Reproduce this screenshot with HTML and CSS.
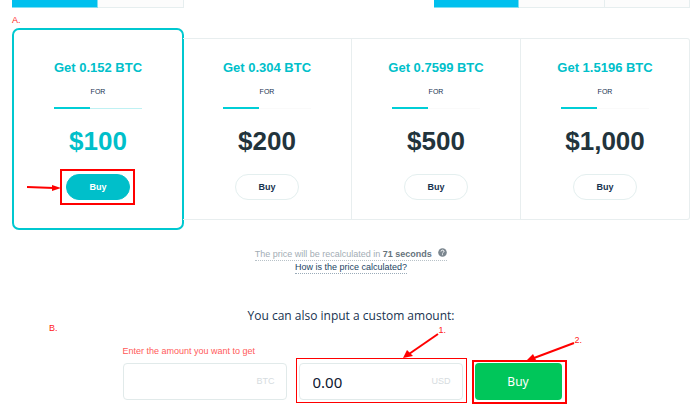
FILE: index.html
```html
<!DOCTYPE html>
<html lang="en">
<head>
<meta charset="utf-8">
<title>Buy bitcoin</title>
<link rel="stylesheet" href="styles.css">
</head>
<body>
<main class="page">
  <div class="tabs">
    <div class="tab-group tab-group-two"><span class="tab active"></span><span class="tab"></span></div>
    <div class="tab-group"><span class="tab active"></span><span class="tab"></span><span class="tab"></span></div>
  </div>

  <p class="step">A.</p>
  <section class="plans">
    <article class="plan featured">
      <h2>Get 0.152 BTC</h2>
      <p class="for">FOR</p>
      <div class="rule"></div>
      <p class="price">$100</p>
      <div class="marked">
        <button class="buy" type="button">Buy</button>
        <span class="frame frame-plan"></span>
        <svg class="arrow arrow-plan" width="34" height="10" viewBox="0 0 34 10"><path d="M0 4L27 5" stroke="#f00" stroke-width="2"/><path d="M25 2L34 5L25 8Z" fill="#f00"/></svg>
      </div>
    </article>
    <article class="plan">
      <h2>Get 0.304 BTC</h2>
      <p class="for">FOR</p>
      <div class="rule"></div>
      <p class="price">$200</p>
      <button class="buy" type="button">Buy</button>
    </article>
    <article class="plan">
      <h2>Get 0.7599 BTC</h2>
      <p class="for">FOR</p>
      <div class="rule"></div>
      <p class="price">$500</p>
      <button class="buy" type="button">Buy</button>
    </article>
    <article class="plan">
      <h2>Get 1.5196 BTC</h2>
      <p class="for">FOR</p>
      <div class="rule"></div>
      <p class="price">$1,000</p>
      <button class="buy" type="button">Buy</button>
    </article>
  </section>

  <section class="notes">
    <p class="recalc">The price will be recalculated in <b>71 seconds</b>
      <svg class="help" width="9" height="9" viewBox="0 0 9 9"><circle cx="4.5" cy="4.5" r="4.3" fill="#7b868f"/><path d="M3 3.5C3 1.7 6 1.7 6 3.4C6 4.4 4.5 4.3 4.5 5.5M4.5 6.3V7.2" fill="none" stroke="#fff" stroke-width="1"/></svg>
    </p>
    <a class="how" href="#calculation">How is the price calculated?</a>
  </section>

  <section class="custom">
    <h3>You can also input a custom amount:</h3>
    <span class="step step-b">B.</span>
    <form class="amounts">
      <label class="hint" for="btc">Enter the amount you want to get</label>
      <div class="field">
        <input id="btc" type="text">
        <span class="unit">BTC</span>
      </div>
      <div class="field">
        <input id="usd" type="text" value="0.00" aria-label="USD">
        <span class="unit">USD</span>
        <span class="frame frame-usd"></span>
        <svg class="arrow arrow-usd" width="36" height="26" viewBox="0 0 36 26"><path d="M35 1L6 21" stroke="#f00" stroke-width="2"/><path d="M0 25L4 17L10 23Z" fill="#f00"/></svg>
        <span class="number number-usd">1.</span>
      </div>
      <div class="field">
        <button class="submit" type="button">Buy</button>
        <span class="frame frame-submit"></span>
        <svg class="arrow arrow-submit" width="48" height="20" viewBox="0 0 48 20"><path d="M47 1L7 16" stroke="#f00" stroke-width="2"/><path d="M0 18L6 12L9 18Z" fill="#f00"/></svg>
        <span class="number number-submit">2.</span>
      </div>
    </form>
  </section>
</main>
</body>
</html>
```

FILE: styles.css
```css
* { box-sizing: border-box; }

body {
  margin: 0;
  background: #fff;
  color: #17324f;
  font-family: "Liberation Sans", Arial, sans-serif;
  font-size: 9px;
}

h2, h3, p { margin: 0; }
button, input { font: inherit; color: inherit; }

.page { padding: 0 10px 8px 12px; }

.tabs { display: flex; justify-content: space-between; }
.tab-group { display: flex; width: 256px; }
.tab-group-two { width: 172px; }
.tab {
  flex: 1;
  height: 8px;
  background: #fcfcfc;
  border: solid #e6eeef;
  border-width: 0 1px 1px 0;
}
.tab.active { background: #00c0ee; border-color: #7fdff2; }

.step { color: #ff2020; font-size: 9px; line-height: 12px; }
p.step { padding-top: 6px; height: 20px; }

.plans {
  display: grid;
  grid-template-columns: repeat(4, 1fr);
  align-items: center;
  padding-left: 2px;
}
.plan {
  display: flex;
  flex-direction: column;
  align-items: center;
  height: 182px;
  padding-top: 20px;
  border: solid #e8eeef;
  border-width: 1px 1px 1px 0;
}
.plan:last-child { border-radius: 0 3px 3px 0; }
.plan.featured {
  height: 202px;
  margin: 0 -1px 0 -2px;
  padding-top: 29px;
  border: 2px solid #00c8d0;
  border-radius: 7px;
}
.plan h2 {
  color: #00bfca;
  font-size: 13px;
  line-height: 18px;
}
.for { margin-top: 9px; font-size: 7px; line-height: 12px; }
.rule {
  width: 88px;
  height: 2px;
  margin-top: 9px;
  background: linear-gradient(#00ced6, #00ced6) 0 0 / 36px 2px no-repeat, linear-gradient(#fafafa, #fafafa) 0 1px / 100% 1px no-repeat;
}
.featured .rule {
  background: linear-gradient(#00ced6, #00ced6) 0 0 / 36px 2px no-repeat, linear-gradient(#bff1f3, #bff1f3) 0 1px / 100% 1px no-repeat;
}
.price {
  margin-top: 16px;
  color: #22343c;
  font-size: 26px;
  font-weight: bold;
  line-height: 32px;
}
.featured .price { color: #00bfca; }
.marked { position: relative; margin-top: 17px; }
.buy {
  display: block;
  width: 64px;
  height: 26px;
  margin-top: 17px;
  padding: 0;
  background: #fff;
  border: 1px solid #e4efef;
  border-radius: 13px;
  font-size: 9px;
  font-weight: bold;
}
.featured .buy { margin-top: 0; background: #00bfca; border-color: #00bfca; color: #fff; }

.frame { position: absolute; border: 2px solid #f00; pointer-events: none; }
.frame-plan { inset: -5px -5px -5px -6px; }
.frame-usd { inset: -5px -4px -3px -3px; border-width: 1px; }
.frame-submit { inset: -3px -5px -4px -3px; }
.arrow { position: absolute; }
.arrow-plan { left: -39px; top: 9px; }
.arrow-usd { left: 104px; top: -30px; }
.arrow-submit { left: 52px; top: -21px; }
.number { position: absolute; color: #ff2020; font-size: 9px; line-height: 12px; }
.number-usd { left: 140px; top: -39px; }
.number-submit { left: 100px; top: -29px; }

.notes {
  display: flex;
  flex-direction: column;
  align-items: center;
  padding-top: 18px;
}
.recalc {
  height: 13px;
  border-bottom: 1px dotted #b8c2c8;
  color: #a3adb5;
  line-height: 12px;
}
.recalc b { color: #66737c; }
.help { margin-left: 4px; vertical-align: 0; }
.how {
  height: 13px;
  border-bottom: 1px dotted #9aabb8;
  color: #1d4563;
  line-height: 12px;
  text-decoration: none;
}

.custom { position: relative; padding-top: 33px; }
.custom h3 {
  font-family: "Open Sans", sans-serif;
  font-size: 12px;
  font-weight: normal;
  line-height: 18px;
  text-align: center;
}
.step-b { position: absolute; left: 37px; top: 48px; }
.amounts {
  display: grid;
  grid-template-columns: 164px 164px 87px;
  justify-content: center;
  column-gap: 12px;
  row-gap: 6px;
  margin-top: 20px;
  padding-right: 18px;
}
.hint { grid-column: 1 / -1; color: #ff5a5a; font-size: 9px; line-height: 12px; }
.field { position: relative; }
.field input {
  display: block;
  width: 100%;
  height: 37px;
  padding: 0 44px 0 13px;
  border: 1px solid #e1eaea;
  border-radius: 4px;
  background: #fff;
  color: #0c1630;
  font-family: "Noto Sans", sans-serif;
  font-size: 15px;
}
.unit { position: absolute; right: 12px; top: 12px; color: #d6dce0; line-height: 12px; }
.submit {
  width: 100%;
  height: 37px;
  padding: 0;
  border: 0;
  border-radius: 4px;
  background: #00c65a;
  color: #fff;
  font-family: "Noto Sans", sans-serif;
  font-size: 12px;
}
```
